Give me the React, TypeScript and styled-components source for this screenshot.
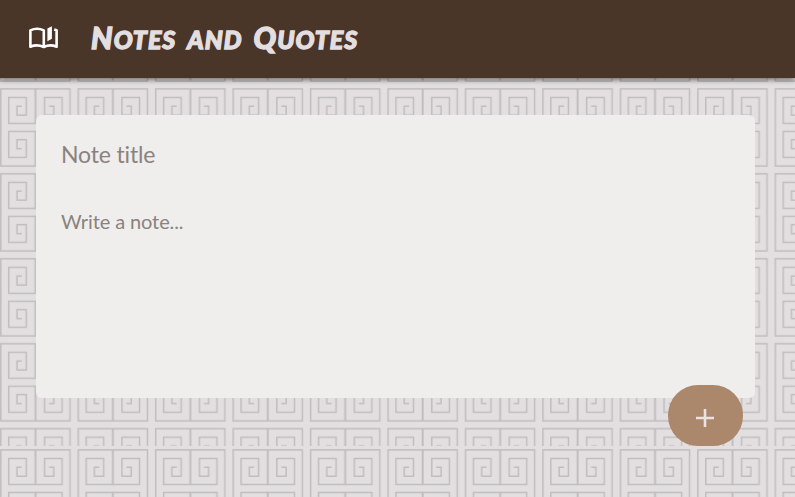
import React from "react";
import styled, { createGlobalStyle } from "styled-components";

const GlobalStyle = createGlobalStyle`
  * { box-sizing: border-box; }
  html, body { margin: 0; height: 100%; }
  #root { height: 100%; }
  body { background: #e3dfe0; overflow: hidden; font-family: Lato, "Open Sans", sans-serif; }
`;

const Page = styled.div`
  position: relative;
  min-height: 100vh;
  overflow: hidden;
`;

const Backdrop = styled.svg`
  position: absolute;
  inset: 0;
  width: 100%;
  height: 100%;
`;

const Header = styled.header`
  position: relative;
  display: flex;
  align-items: center;
  height: 78px;
  padding: 0 28px;
  background: #4a3529;
  box-shadow: 0 2px 5px rgba(0, 0, 0, 0.5);
`;

const BookIcon = styled.svg`
  width: 31px;
  height: 24px;
  margin-bottom: 3px;
`;

const Title = styled.h1`
  display: flex;
  align-items: baseline;
  gap: 11px;
  margin: 0 0 2px 32px;
  color: #e3dfe0;
  font: italic 900 25px/40px Lato, sans-serif;
  letter-spacing: 1px;
  white-space: nowrap;
  -webkit-text-stroke: 1.3px #e3dfe0;
`;

const Word = styled.span<{ $capital?: boolean }>`
  display: block;
  text-transform: uppercase;
  &::first-letter { font-size: ${(p) => (p.$capital ? "30px" : "25px")}; }
`;

const NoteForm = styled.form`
  position: relative;
  display: flex;
  flex-direction: column;
  width: 719px;
  height: 283px;
  margin: 37px 0 0 36px;
  padding: 19px 25px;
  border-radius: 6px;
  background: #efeeec;
`;

const TitleField = styled.input`
  height: 40px;
  padding: 0;
  border: 0;
  outline: 0;
  background: transparent;
  font: 400 23px/40px Lato, sans-serif;
  font-variant-ligatures: none;
  letter-spacing: -0.15px;
  &::placeholder { color: #8a827e; opacity: 1; }
`;

const BodyField = styled.textarea`
  height: 150px;
  margin-top: 32px;
  padding: 0;
  border: 0;
  outline: 0;
  resize: none;
  background: transparent;
  font: 400 20px/30px Lato, sans-serif;
  font-variant-ligatures: none;
  letter-spacing: -0.1px;
  &::placeholder { color: #8a827e; opacity: 1; }
`;

const AddButton = styled.button`
  position: absolute;
  right: 12px;
  bottom: -48px;
  display: grid;
  place-items: center;
  width: 75px;
  height: 61px;
  padding: 0;
  border: 0;
  border-radius: 30px;
  background: #ab876c;
`;

const PlusIcon = styled.svg`
  width: 18px;
  height: 18px;
  margin: 5px 2px 0 0;
  stroke: #e9e2e0;
  stroke-width: 2.6;
`;

/* The key motif repeats in rows and columns inside a band 446px high. */
function KeyPattern() {
  return (
    <Backdrop aria-hidden="true">
      <defs>
        <g id="spiral">
          <path d="M21.8 17.3H17V26.4H26.3V8.7H8.7V34.7H35.2V0" />
        </g>
        <g id="half">
          <use href="#spiral" />
          <use href="#spiral" transform="translate(0 77.2) scale(1 -1)" />
        </g>
        <pattern id="keys" width="77.45" height="84.95" y="3" patternUnits="userSpaceOnUse">
          <g fill="none" stroke="#bfbdbe" strokeWidth="1.5" transform="translate(0 .9)">
            <rect x=".8" y="0" width="69.2" height="77.2" />
            <use href="#half" />
            <use href="#half" transform="translate(70.8 0) scale(-1 1)" />
          </g>
        </pattern>
      </defs>
      <rect width="100%" height="446" fill="url(#keys)" />
      <g transform="translate(0 446)">
        <rect y="3" width="100%" height="443" fill="url(#keys)" />
      </g>
    </Backdrop>
  );
}

export default function App() {
  return (
    <>
      <GlobalStyle />
      <Page>
        <KeyPattern />
        <Header>
          <BookIcon viewBox="0 0 31 24">
            <path
              d="M2.4 4.4Q9 1.200 15.800 4.400V21Q9 18 2.400 20.700ZM15.800 21Q22 18 28.600 20.700V4.200L26.200 3.400"
              fill="none"
              stroke="#fff"
              strokeWidth="2.600"
              strokeLinejoin="round"
            />
            <path d="M19.400 2.500L23.900 .3V12.800L19.400 15.300Z" fill="#fff" />
          </BookIcon>
          <Title>
            <Word $capital>Notes</Word>
            <Word>and</Word>
            <Word $capital>Quotes</Word>
          </Title>
        </Header>
        <NoteForm>
          <TitleField placeholder="Note title" />
          <BodyField placeholder="Write a note..." />
          <AddButton type="button" aria-label="Add note">
            <PlusIcon viewBox="0 0 18 18"><path d="M9 0V18M0 9H18" /></PlusIcon>
          </AddButton>
        </NoteForm>
      </Page>
    </>
  );
}
